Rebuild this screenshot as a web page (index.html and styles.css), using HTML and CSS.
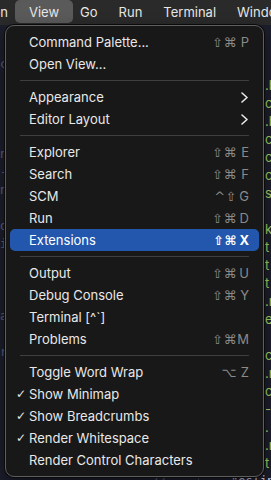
FILE: index.html
```html
<!DOCTYPE html>
<html>
<head>
<meta charset="utf-8">
<link rel="stylesheet" href="styles.css">
</head>
<body>
<div class="menubar">
  <div class="mb-item mb-cut"><span>Selection</span></div>
  <div class="mb-item mb-active">View</div>
  <div class="mb-item">Go</div>
  <div class="mb-item">Run</div>
  <div class="mb-item">Terminal</div>
  <div class="mb-item">Window</div>
</div>
<div class="editor">
  <div class="gutter">
    <div class="ln">ce</div><div class="ln"></div><div class="ln"></div>
    <div class="ln"></div><div class="ln"></div><div class="ln">n</div><div class="ln">-</div><div class="ln">n</div>
    <div class="ln"></div><div class="ln">o</div><div class="ln">i</div><div class="ln"></div><div class="ln"></div>
    <div class="ln"></div><div class="ln">a</div><div class="ln"></div><div class="ln">r</div><div class="ln"></div>
  </div>
  <div class="code">
    <div class="ln">.b</div><div class="ln">c</div><div class="ln">.b</div><div class="ln">c</div><div class="ln">c</div><div class="ln">c</div><div class="ln">s</div>
    <div class="ln"></div>
    <div class="ln">k</div><div class="ln">t</div><div class="ln">t</div><div class="ln">t</div><div class="ln">.n</div><div class="ln">e</div>
    <div class="ln"></div>
    <div class="ln">c</div><div class="ln">.n</div><div class="ln">c</div><div class="ln">-</div><div class="ln">.</div><div class="ln">.n</div><div class="ln">t</div>
  </div>
</div>
<div class="lastline"><span class="cmt">//</span><span class="guide"></span><span class="str">"eslint</span></div>

<div class="menu">
  <div class="item"><span class="label">Command Palette...</span><span class="sc"><span class="mods">⇧⌘</span><span class="key">P</span></span></div>
  <div class="item"><span class="label">Open View...</span></div>
  <div class="sep"></div>
  <div class="item"><span class="label">Appearance</span><svg class="chev" width="7" height="11" viewBox="0 0 7 11"><polyline points="1,1 6,5.5 1,10" fill="none" stroke="#e8e8e8" stroke-width="1.6" stroke-linecap="round" stroke-linejoin="round"/></svg></div>
  <div class="item"><span class="label">Editor Layout</span><svg class="chev" width="7" height="11" viewBox="0 0 7 11"><polyline points="1,1 6,5.5 1,10" fill="none" stroke="#e8e8e8" stroke-width="1.6" stroke-linecap="round" stroke-linejoin="round"/></svg></div>
  <div class="sep"></div>
  <div class="item"><span class="label">Explorer</span><span class="sc"><span class="mods">⇧⌘</span><span class="key">E</span></span></div>
  <div class="item"><span class="label">Search</span><span class="sc"><span class="mods">⇧⌘</span><span class="key">F</span></span></div>
  <div class="item"><span class="label">SCM</span><span class="sc"><span class="mods">^⇧</span><span class="key">G</span></span></div>
  <div class="item"><span class="label">Run</span><span class="sc"><span class="mods">⇧⌘</span><span class="key">D</span></span></div>
  <div class="item active"><span class="label">Extensions</span><span class="sc"><span class="mods">⇧⌘</span><span class="key">X</span></span></div>
  <div class="sep"></div>
  <div class="item"><span class="label">Output</span><span class="sc"><span class="mods">⇧⌘</span><span class="key">U</span></span></div>
  <div class="item"><span class="label">Debug Console</span><span class="sc"><span class="mods">⇧⌘</span><span class="key">Y</span></span></div>
  <div class="item"><span class="label">Terminal [^`]</span></div>
  <div class="item"><span class="label">Problems</span><span class="sc"><span class="mods">⇧⌘</span><span class="key">M</span></span></div>
  <div class="sep"></div>
  <div class="item"><span class="label">Toggle Word Wrap</span><span class="sc"><span class="mods">⌥</span><span class="key">Z</span></span></div>
  <div class="item"><span class="check">✓</span><span class="label">Show Minimap</span></div>
  <div class="item"><span class="check">✓</span><span class="label">Show Breadcrumbs</span></div>
  <div class="item"><span class="check">✓</span><span class="label">Render Whitespace</span></div>
  <div class="item"><span class="label">Render Control Characters</span></div>
</div>
</body>
</html>
```

FILE: styles.css
```css
html, body {
  margin: 0;
  padding: 0;
}
body {
  width: 271px;
  height: 480px;
  overflow: hidden;
  background: #1c1e2c;
  font-family: Inter, "DejaVu Sans", sans-serif;
  position: relative;
}
.menubar {
  height: 25px;
  background: #2a2a2a;
  display: flex;
  align-items: flex-start;
  gap: 7px;
  color: #e6e6e6;
  font-size: 13px;
  white-space: nowrap;
}
.mb-item {
  height: 23px;
  line-height: 24px;
  padding: 0 7px;
  flex: none;
}
.mb-cut {
  width: 8px;
  padding: 0;
  margin-right: 7px;
  display: flex;
  justify-content: flex-end;
  overflow: hidden;
}
.mb-cut span { flex: none; }
.mb-active {
  background: #5a5a5a;
  border-radius: 5px;
  padding: 0 14px;
  margin: 0 -7px;
}
.editor {
  height: 447px;
  display: flex;
  justify-content: space-between;
  font-family: "DejaVu Sans Mono", monospace;
  font-size: 12px;
  overflow: hidden;
}
.gutter {
  width: 10px;
  padding-top: 30px;
  color: #5a5f88;
  overflow: hidden;
}
.code {
  width: 6px;
  padding-top: 51px;
  color: #a3d266;
  overflow: hidden;
  white-space: nowrap;
  font-family: Inter, sans-serif;
  font-size: 13px;
}
.ln {
  height: 18px;
  line-height: 18px;
}
.lastline {
  height: 18px;
  font-family: "DejaVu Sans Mono", monospace;
  font-size: 12px;
  line-height: 18px;
  display: flex;
  white-space: nowrap;
  overflow: hidden;
}
.cmt { margin-left: 152px; color: #565f89; width: 46px; flex: none; }
.guide { width: 1px; background: #3b3f55; height: 18px; margin-right: 32px; flex: none; }
.str { color: #c8cde6; }

.menu {
  position: absolute;
  left: 5px;
  top: 25px;
  width: 249px;
  padding: 5px 4px;
  background: #181818;
  border: 1px solid #5e5e5e;
  border-radius: 9px;
  box-shadow: 0 0 0 1px #0a0a0a, 0 6px 16px rgba(0,0,0,0.5);
  font-size: 13px;
  color: #e8e8e8;
}
.item {
  height: 22px;
  display: flex;
  align-items: center;
  padding: 0 10px 0 19px;
  border-radius: 5px;
  position: relative;
  white-space: nowrap;
}
.label { flex: 1; }
.check {
  position: absolute;
  left: 6px;
  top: 0;
  line-height: 22px;
  font-size: 12px;
  font-family: "DejaVu Sans", sans-serif;
}
.sc {
  display: flex;
  align-items: center;
  color: #8a8a8a;
  font-family: "DejaVu Sans", sans-serif;
  font-size: 13px;
}
.mods { letter-spacing: 0.5px; }
.key {
  width: 12px;
  text-align: right;
  font-family: Inter, sans-serif;
  font-size: 13px;
}
.chev { margin-right: 1px; }
.item.active {
  background: #2356ad;
  color: #ffffff;
}
.item.active .sc {
  color: #ffffff;
  font-weight: bold;
}
.sep {
  height: 1px;
  margin: 5px 10px 5px 10px;
  background: #3e3e3e;
}
```
